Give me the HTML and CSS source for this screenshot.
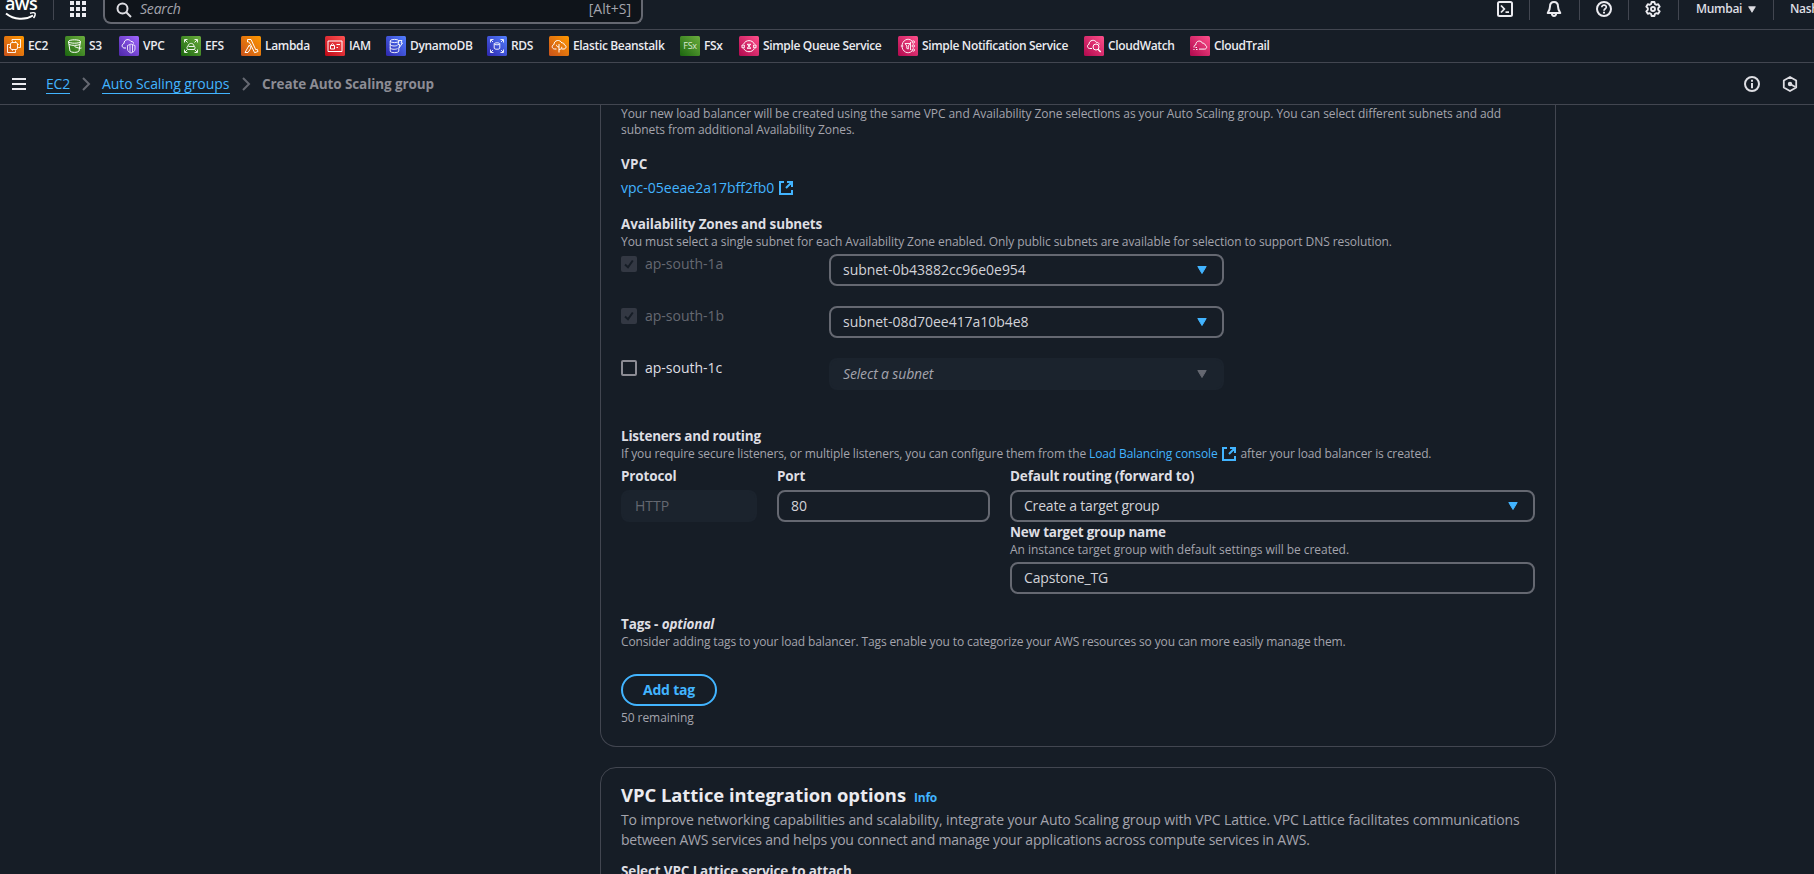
FILE: index.html
```html
<!DOCTYPE html>
<html lang="en">
<head>
<meta charset="utf-8">
<title>Create Auto Scaling group</title>
<link rel="stylesheet" href="styles.css">
</head>
<body>
<svg width="0" height="0" class="defs" aria-hidden="true">
  <defs>
    <linearGradient id="orange" x1="0" y1="1" x2="1" y2="0"><stop offset="0" stop-color="#c8511b"/><stop offset="1" stop-color="#ff9900"/></linearGradient>
    <linearGradient id="green" x1="0" y1="1" x2="1" y2="0"><stop offset="0" stop-color="#1b660f"/><stop offset="1" stop-color="#6cae3e"/></linearGradient>
    <linearGradient id="purple" x1="0" y1="1" x2="1" y2="0"><stop offset="0" stop-color="#4d27a8"/><stop offset="1" stop-color="#a166ff"/></linearGradient>
    <linearGradient id="red" x1="0" y1="1" x2="1" y2="0"><stop offset="0" stop-color="#bd0816"/><stop offset="1" stop-color="#ff5252"/></linearGradient>
    <linearGradient id="blue" x1="0" y1="1" x2="1" y2="0"><stop offset="0" stop-color="#2e27ad"/><stop offset="1" stop-color="#527fff"/></linearGradient>
    <linearGradient id="pink" x1="0" y1="1" x2="1" y2="0"><stop offset="0" stop-color="#b0084d"/><stop offset="1" stop-color="#ff4f8b"/></linearGradient>
    <symbol id="external" viewBox="0 0 16 16"><path d="M6 2H2v12h12v-4M9 2h5v5M14 2 8 8" fill="none" stroke="#42b4ff" stroke-width="2"/></symbol>
    <symbol id="caret" viewBox="0 0 10 8"><path d="M.8.5h8.4L5 7.500z" fill="currentColor" stroke="currentColor" stroke-linejoin="round"/></symbol>
    <symbol id="chevron" viewBox="0 0 9 14"><path d="M1 1l6 6-6 6" fill="none" stroke="#656871" stroke-width="2"/></symbol>
  </defs>
</svg>

<header class="topnav">
  <a class="logo"><span class="logo-text">aws</span>
    <svg class="smile" width="32" height="9" viewBox="0 0 32 9"><path d="M1 1.500C9 8 20 8.500 28 3.500" fill="none" stroke="#fff" stroke-width="2"/><path d="M25 1.300c2-.7 4.500-.6 5 0s0 3-1.500 4.700" fill="none" stroke="#fff" stroke-width="1.500"/></svg>
  </a>
  <div class="apps">
    <svg width="16" height="16" viewBox="0 0 16 16" fill="#ebebf0"><path d="M0 0h4v4H0zM6 0h4v4H6zM12 0h4v4h-4zM0 6h4v4H0zM6 6h4v4H6zM12 6h4v4h-4zM0 12h4v4H0zM6 12h4v4H6zM12 12h4v4h-4z"/></svg>
  </div>
  <div class="search">
    <svg width="16" height="16" viewBox="0 0 16 16" fill="none" stroke="#dedee3" stroke-width="2"><circle cx="6.500" cy="6.500" r="5"/><path d="M10 10l5 5"/></svg>
    <span class="search-placeholder">Search</span>
    <span class="search-key">[Alt+S]</span>
  </div>
  <nav class="utils">
    <span class="util"><svg width="16" height="16" viewBox="0 0 16 16" fill="none" stroke="#ebebf0" stroke-width="2"><rect x="1" y="1" width="14" height="14" rx="1.500"/><path d="M4 4.500 7.300 8 4 11.500M8.500 11.200H12" stroke-width="1.800"/></svg></span>
    <span class="util"><svg width="16" height="16" viewBox="0 0 16 16" fill="none" stroke="#ebebf0" stroke-width="2"><path d="M8 1C5 1 4 3.300 4 5.500 4 8 3.400 9.500 1.700 12h12.600C12.600 9.500 12 8 12 5.500 12 3.300 11 1 8 1zM5.800 12.200c.2 3.600 4.200 3.600 4.400 0" stroke-linejoin="round"/></svg></span>
    <span class="util"><svg width="16" height="16" viewBox="0 0 16 16" fill="none" stroke="#ebebf0" stroke-width="2"><circle cx="8" cy="8" r="7"/><path d="M5.800 6.300c0-3 4.600-2.800 4.500-.1C10.200 7.800 8 7.700 8 9.700" stroke-width="1.700"/><path d="M8 10.800v1.700"/></svg></span>
    <span class="util"><svg width="16" height="16" viewBox="0 0 16 16" fill="none" stroke="#ebebf0" stroke-width="1.900" stroke-linejoin="round"><path d="M6.600 1h2.800l.5 2 1.300.8 2-.6 1.500 2.500L13.200 7.200v1.600l1.500 1.500-1.500 2.500-2-.6-1.300.8-.5 2H6.600l-.5-2-1.300-.8-2 .6-1.500-2.500 1.500-1.500V7.200L1.300 5.700l1.500-2.500 2 .6L6.100 3z"/><circle cx="8" cy="8" r="2"/></svg></span>
    <span class="util region">Mumbai<svg class="caret" width="8" height="7"><use href="#caret"/></svg></span>
    <span class="util user">Nash</span>
  </nav>
</header>

<nav class="favorites">
  <a class="fav fav-ec2"><svg class="tile" viewBox="0 0 20 20"><rect width="20" height="20" rx="1.500" fill="url(#orange)"/><g fill="none" stroke="#fff" stroke-width=".9"><path d="M8 5V3.500H16.500V11.500H15M11.500 15v1.500H3.500V8.500H5"/><rect x="6.500" y="6.500" width="7" height="7" rx="1.500"/><path d="M8.500 5v1.500M11.500 5v1.500M8.500 13.500V15M11.500 13.500V15M5 8.500h1.500M5 11.500h1.500M13.500 8.500H15M13.500 11.500H15" stroke-width=".7"/></g></svg>EC2</a>
  <a class="fav fav-s3"><svg class="tile" viewBox="0 0 20 20"><rect width="20" height="20" rx="1.500" fill="url(#green)"/><g fill="none" stroke="#fff" stroke-width="1"><ellipse cx="9.500" cy="5.500" rx="6" ry="1.700"/><path d="M3.500 5.500 5 15c1 1.800 8 1.800 9 0l1.500-9.500M9.500 10.500c2 1 5.500 2.300 7 1.500M4 8.500c3 1.200 8 1.200 11 0"/></g></svg>S3</a>
  <a class="fav fav-vpc"><svg class="tile" viewBox="0 0 20 20"><rect width="20" height="20" rx="1.500" fill="url(#purple)"/><g fill="none" stroke="#fff" stroke-width="1"><path d="M7 12H5c-2.500-.5-2.500-4 0-4.500C5 3 10.500 2.500 12 5.500c1.500-.3 2.300.5 2.500 2"/><path d="M8.500 9.500 12 8l4 1.500v3.500c0 2-2 3.500-4 4-2-.6-3.500-2-3.500-4zM11 8.700V16M13.500 8.700V16" stroke-width=".8"/></g></svg>VPC</a>
  <a class="fav fav-efs"><svg class="tile" viewBox="0 0 20 20"><rect width="20" height="20" rx="1.500" fill="url(#green)"/><g fill="none" stroke="#fff" stroke-width=".9"><path d="M3.500 6.500v-3h3M13.500 3.500h3v3M3.500 13.500v3h3M16.500 13.500v3h-3M4 4l2.500 2.500M16 4l-2.500 2.500M4 16l2.500-2.500M16 16l-2.500-2.500"/><path d="M7 10c-1.300.5-1.500 3 0 3.500h6c1.500-.5 1.300-3 0-3.500-.2-3-5-4-6 0zM7.500 10.500h5.500"/></g></svg>EFS</a>
  <a class="fav fav-lambda"><svg class="tile" viewBox="0 0 20 20"><rect width="20" height="20" rx="1.500" fill="url(#orange)"/><path d="M6.500 3.500H10l4.800 10.300 1.500-.5.7 2.200-3.400 1.200L9 7.300 7.700 6H6.500zM8.300 9 4 16.500h3l3-4.500z" fill="none" stroke="#fff" stroke-width="1"/></svg>Lambda</a>
  <a class="fav fav-iam"><svg class="tile" viewBox="0 0 20 20"><rect width="20" height="20" rx="1.500" fill="url(#red)"/><g fill="none" stroke="#fff" stroke-width="1"><path d="M3 5h14v10.500H3z"/><path d="M5.500 9.500h4v3.500h-4zM6.300 9.500c0-2.500 2.400-2.500 2.400 0M11.500 8.500h3.500M11.500 11.500H13"/></g></svg>IAM</a>
  <a class="fav fav-dynamodb"><svg class="tile" viewBox="0 0 20 20"><rect width="20" height="20" rx="1.500" fill="url(#blue)"/><g fill="none" stroke="#fff" stroke-width=".9"><ellipse cx="8.500" cy="5" rx="4.300" ry="1.600"/><path d="M4.200 5v10c0 2.200 8.600 2.200 8.600 0v-3M4.200 8.300c0 1.800 5 2.200 7.300 1M4.200 11.600c0 1.800 5 2.200 7.300 1M13 4.500h3L15 7h1.500l-3.500 5 .7-3.500H12z"/></g></svg>DynamoDB</a>
  <a class="fav fav-rds"><svg class="tile" viewBox="0 0 20 20"><rect width="20" height="20" rx="1.500" fill="url(#blue)"/><g fill="none" stroke="#fff" stroke-width=".9"><path d="M3.500 6.500v-3h3M13.500 3.500h3v3M3.500 13.500v3h3M16.500 13.500v3h-3M4 4l2 2M16 4l-2 2M4 16l2-2M16 16l-2-2"/><ellipse cx="10" cy="7.800" rx="2.800" ry="1"/><path d="M7.200 7.800v4.500c0 1.300 5.600 1.300 5.600 0V7.800"/></g></svg>RDS</a>
  <a class="fav fav-beanstalk"><svg class="tile" viewBox="0 0 20 20"><rect width="20" height="20" rx="1.500" fill="url(#orange)"/><g fill="none" stroke="#fff" stroke-width="1"><path d="M7.500 13H5.500C2.500 12.700 2.500 9 5 8.500 5 4 11 3 12.800 7c1.500-.4 2.400.4 2.500 1.800 2.500.6 2.200 3.900-.3 4.200h-2.500M10 8v8.500M10 11c-1.800 0-2.500-.8-2.500-2.200M10 13.500c2 0 2.800-1 2.800-2.700"/></g></svg>Elastic Beanstalk</a>
  <a class="fav fav-fsx"><span class="tile tile-fsx">FSx</span>FSx</a>
  <a class="fav fav-sqs"><svg class="tile" viewBox="0 0 20 20"><rect width="20" height="20" rx="1.500" fill="url(#pink)"/><g fill="none" stroke="#fff" stroke-width="1"><path d="M4.700 8C6.500 3.500 13.500 3.500 15.300 8M4.700 12.500c1.800 4.300 8.800 4.300 10.600 0M3 9h2.300v2.800H3zM14.700 9H17v2.800h-2.300z"/><path d="M8 8.300h4M8 12.300h4M8.500 8.500l3 3.500M11.500 8.500l-3 3.500"/></g></svg>Simple Queue Service</a>
  <a class="fav fav-sns"><svg class="tile" viewBox="0 0 20 20"><rect width="20" height="20" rx="1.500" fill="url(#pink)"/><g fill="none" stroke="#fff" stroke-width=".9"><path d="M14 5c-4-4-10-.5-10 5s6 9 10 5M2.800 10h2.500M7 7.500h5L10.300 10v3l-1.500-.6V10z"/><circle cx="15.300" cy="6" r="1.200"/><circle cx="15.300" cy="10" r="1.200"/><circle cx="15.300" cy="14" r="1.200"/><path d="M12.500 6v8"/></g></svg>Simple Notification Service</a>
  <a class="fav fav-cloudwatch"><svg class="tile" viewBox="0 0 20 20"><rect width="20" height="20" rx="1.500" fill="url(#pink)"/><g fill="none" stroke="#fff" stroke-width="1"><path d="M8 12.500H5.500C2.800 12 3 8.700 5 8.300 5 3.800 11 3 12.500 6.500c1.500-.3 2.400.5 2.700 2"/><circle cx="12" cy="11" r="3"/><path d="M14 13.300l2.700 2.700" stroke-width="1.500"/></g></svg>CloudWatch</a>
  <a class="fav fav-cloudtrail"><svg class="tile" viewBox="0 0 20 20"><rect width="20" height="20" rx="1.500" fill="url(#pink)"/><path d="M4 11.500c0-1.800.4-2.500 1.800-2.700C5.800 4.500 11 3.800 12.600 7.300c1.400-.3 2.300.5 2.600 1.800 2.300.8 1.800 4-.5 4H9M3.500 13.500h1M6 13.500h1.500M5.500 11.500H7" fill="none" stroke="#fff" stroke-width="1"/></svg>CloudTrail</a>
</nav>

<div class="crumbbar">
  <svg class="menu" width="14" height="12" viewBox="0 0 14 12" fill="#ebebf0"><path d="M0 0h14v2H0zM0 5h14v2H0zM0 10h14v2H0z"/></svg>
  <a class="crumb crumb-ec2">EC2</a>
  <svg class="chevron" width="9" height="14"><use href="#chevron"/></svg>
  <a class="crumb crumb-groups">Auto Scaling groups</a>
  <svg class="chevron" width="9" height="14"><use href="#chevron"/></svg>
  <span class="crumb-current">Create Auto Scaling group</span>
  <div class="crumb-tools">
    <svg width="16" height="16" viewBox="0 0 16 16" fill="none" stroke="#dedee3" stroke-width="2"><circle cx="8" cy="8" r="7"/><path d="M8 3.800v2M8 7v5.200"/></svg>
    <svg width="16" height="16" viewBox="0 0 16 16" fill="none" stroke="#dedee3" stroke-width="1.800" stroke-linejoin="round"><path d="M8 1l6.200 3.500v7L8 15l-6.200-3.500v-7z"/><circle cx="8" cy="8" r="1.300" fill="#dedee3"/><path d="M8 8l5.500 3" /></svg>
  </div>
</div>

<main class="content">
  <section class="card card-balancer">
    <p class="hint hint-intro">Your new load balancer will be created using the same VPC and Availability Zone selections as your Auto Scaling group. You can select different subnets and add<br>subnets from additional Availability Zones.</p>
    <div class="field">
      <h3 class="label label-short">VPC</h3>
      <a class="link vpc-link">vpc-05eeae2a17bff2fb0<svg class="ext" width="16" height="16"><use href="#external"/></svg></a>
    </div>
    <div class="field">
      <h3 class="label">Availability Zones and subnets</h3>
      <p class="hint">You must select a single subnet for each Availability Zone enabled. Only public subnets are available for selection to support DNS resolution.</p>
      <div class="zones">
        <div class="zone">
          <span class="check check-locked"><svg width="16" height="16" viewBox="0 0 16 16"><path d="M4 8.500l3 2.800L11.800 4.500" fill="none" stroke="#161d26" stroke-width="2"/></svg></span>
          <span class="zone-name zone-muted">ap-south-1a</span>
          <div class="input select">subnet-0b43882cc96e0e954<svg width="10" height="8"><use href="#caret"/></svg></div>
        </div>
        <div class="zone">
          <span class="check check-locked"><svg width="16" height="16" viewBox="0 0 16 16"><path d="M4 8.500l3 2.800L11.800 4.500" fill="none" stroke="#161d26" stroke-width="2"/></svg></span>
          <span class="zone-name zone-muted">ap-south-1b</span>
          <div class="input select">subnet-08d70ee417a10b4e8<svg width="10" height="8"><use href="#caret"/></svg></div>
        </div>
        <div class="zone">
          <span class="check"></span>
          <span class="zone-name">ap-south-1c</span>
          <div class="input select select-off">Select a subnet<svg width="10" height="8"><use href="#caret"/></svg></div>
        </div>
      </div>
    </div>
    <div class="field field-listeners">
      <h3 class="label label-tight">Listeners and routing</h3>
      <p class="hint hint-listeners">If you require secure listeners, or multiple listeners, you can configure them from the <a class="link">Load Balancing console<svg class="ext" width="16" height="16"><use href="#external"/></svg></a> after your load balancer is created.</p>
      <div class="routing">
        <div><h3 class="label">Protocol</h3><div class="input input-off">HTTP</div></div>
        <div><h3 class="label">Port</h3><div class="input">80</div></div>
        <div>
          <h3 class="label">Default routing (forward to)</h3>
          <div class="input select select-narrow">Create a target group<svg width="10" height="8"><use href="#caret"/></svg></div>
          <h3 class="label label-tight">New target group name</h3>
          <p class="hint hint-target">An instance target group with default settings will be created.</p>
          <div class="input input-name">Capstone_TG</div>
        </div>
      </div>
    </div>
    <div class="field field-tags">
      <h3 class="label">Tags - <i>optional</i></h3>
      <p class="hint hint-tags">Consider adding tags to your load balancer. Tags enable you to categorize your AWS resources so you can more easily manage them.</p>
      <button class="button">Add tag</button>
      <p class="hint">50 remaining</p>
    </div>
  </section>

  <section class="card card-lattice">
    <h2 class="title">VPC Lattice integration options<a class="info">Info</a></h2>
    <p class="desc">To improve networking capabilities and scalability, integrate your Auto Scaling group with VPC Lattice. VPC Lattice facilitates communications<br><span class="desc-second">between AWS services and helps you connect and manage your applications across compute services in AWS.</span></p>
    <h3 class="label label-attach">Select VPC Lattice service to attach</h3>
  </section>
</main>
</body>
</html>
```

FILE: styles.css
```css
* { box-sizing: border-box; }
html, body { height: 874px; overflow: hidden; }
body {
  margin: 0;
  display: flex;
  flex-direction: column;
  background: #161d26;
  color: #dedee3;
  font: 14px/20px "Open Sans", "Noto Sans", sans-serif;
}
.defs { display: block; flex: none; height: 0; }
h2, h3, p { margin: 0; white-space: nowrap; }
svg { flex: none; overflow: visible; }

/* top navigation */
.topnav { flex: none; display: flex; height: 30px; border-bottom: 1px solid #424650; }
.logo { width: 53px; height: 21px; padding-left: 5px; }
.logo-text {
  display: block; height: 10px; color: #fff;
  font-size: 18px; line-height: 6px; font-weight: 600; letter-spacing: -0.6px;
}
.smile { display: block; margin-top: 2px; }
.apps { width: 50px; height: 20px; padding: 1px 0 0 16px; border-left: 1px solid #424650; }
.search {
  display: flex; width: 540px; height: 24px; padding: 0 9px 0 11px;
  border: 2px solid #656871; border-top: 0; border-radius: 0 0 8px 8px;
  background: #0f141a; color: #a4a4ad; line-height: 18px;
}
.search svg { margin-top: 2px; }
.search-placeholder { margin-left: 8px; font-style: italic; letter-spacing: -0.2px; }
.search-key { margin-left: auto; padding-right: 1px; }
.utils { display: flex; margin-left: auto; width: 333px; height: 20px; }
.util { flex: none; width: 50px; padding: 1px 0 0 16px; border-left: 1px solid #424650; }
.util:first-child { width: 48px; border-left: 0; }
.util:nth-child(3) { width: 49px; }
.util svg { display: block; }
.region, .user {
  display: flex; padding: 0 0 0 17px; width: 95px;
  font-size: 12px; font-weight: 600; line-height: 18px; letter-spacing: -0.3px; color: #dedee3;
}
.region .caret { margin: 6px 0 0 6px; }
.user { width: 41px; padding-left: 16px; overflow: hidden; }

/* favorites bar */
.favorites {
  flex: none; display: flex; align-items: center; height: 33px; padding-left: 4px;
  border-bottom: 1px solid #424650;
}
.fav {
  flex: none; display: flex; align-items: center; gap: 4px;
  font-size: 12px; font-weight: 600; letter-spacing: -0.34px; white-space: nowrap; color: #ebebf0;
}
.tile { flex: none; width: 20px; height: 20px; }
.tile-fsx {
  display: flex; align-items: center; justify-content: center; border-radius: 1.5px;
  background: linear-gradient(45deg, #1b660f, #6cae3e); color: #dbe8d3;
  font-size: 9px; font-weight: 400; letter-spacing: -0.3px;
}
.fav-ec2 { width: 61px; }
.fav-s3 { width: 54px; }
.fav-vpc { width: 62px; }
.fav-efs { width: 60px; }
.fav-lambda { width: 84px; }
.fav-iam { width: 61px; }
.fav-dynamodb { width: 101px; }
.fav-rds { width: 62px; }
.fav-beanstalk { width: 131px; }
.fav-fsx { width: 59px; }
.fav-sqs { width: 159px; }
.fav-sns { width: 186px; }
.fav-cloudwatch { width: 106px; }

/* breadcrumbs */
.crumbbar {
  flex: none; display: flex; align-items: center; height: 42px; padding: 0 16px 0 12px;
  border-bottom: 1px solid #424650;
}
.menu { margin-right: 20px; }
.crumb {
  height: 20px; color: #42b4ff; border-bottom: 1px solid #42b4ff; line-height: 20px;
  white-space: nowrap; font-weight: 500; letter-spacing: -0.1px;
}
.crumb-ec2 { width: 24px; letter-spacing: -0.2px; }
.crumb-groups { width: 128px; }
.chevron { margin: 0 11px 0 12px; }
.crumb-current { color: #8c8c94; font-weight: 700; font-size: 13.5px; letter-spacing: -0.1px; padding-top: 1px; }
.crumb-tools { display: flex; gap: 22px; margin-left: auto; }

/* page content */
.content { flex: 1; min-height: 0; padding-left: 600px; overflow: hidden; }
.card { width: 956px; border: 1px solid #424650; padding: 0 20px; }
.card-balancer { height: 642px; border-top: 0; border-radius: 0 0 16px 16px; }
.card-lattice { height: 200px; margin-top: 20px; padding-top: 15px; border-radius: 16px 16px 0 0; }
.hint { font-size: 12px; line-height: 16px; letter-spacing: -0.077px; color: #a4a4ad; }
.hint-intro { padding-top: 1px; }
.field { margin-top: 16px; }
.label { font-size: 13.5px; font-weight: 700; line-height: 20px; letter-spacing: -0.14px; color: #dedee3; }
.label-short { letter-spacing: 0.2px; }
.label-tight { letter-spacing: -0.22px; }
.link { color: #42b4ff; }
.vpc-link { display: flex; align-items: center; gap: 4px; margin-top: 4px; }
.zones { display: grid; row-gap: 20px; margin-top: 4px; }
.zone { display: grid; grid-template-columns: 24px 184px 395px; align-items: start; }
.check { width: 16px; height: 16px; margin-top: 2px; border: 2px solid #8c8c94; border-radius: 2px; }
.check svg { display: block; }
.check-locked { border: 0; background: #333843; }
.zone-name { line-height: 20px; }
.zone-muted { color: #656871; }
.input {
  height: 32px; padding: 0 12px; border: 2px solid #656871; border-radius: 8px;
  line-height: 28px; color: #d2d2d8;
}
.input-off { border-color: #1b232d; background: #1b232d; color: #656871; }
.input-name { letter-spacing: -0.15px; }
.select { display: flex; justify-content: space-between; align-items: center; padding-right: 15px; letter-spacing: -0.03px; }
.select svg { color: #42b4ff; margin-bottom: 1px; }
.select-off { border-color: #1b232d; background: #1b232d; color: #a4a4ad; font-style: italic; letter-spacing: -0.15px; }
.select-off svg { color: #656871; }
.select-narrow { letter-spacing: -0.2px; }
.field-listeners { margin-top: 36px; }
.hint-listeners { letter-spacing: -0.108px; height: 16px; }
.hint-listeners .ext { margin: 0 1px 0 3px; vertical-align: -4px; }
.routing { display: grid; grid-template-columns: 136px 213px 525px; column-gap: 20px; margin-top: 4px; }
.routing > div > .label + .input { margin-top: 4px; }
.routing .hint { margin-bottom: 4px; }
.hint-target { letter-spacing: -0.043px; }
.field-tags { margin-top: 20px; }
.hint-tags { letter-spacing: -0.125px; }
.button {
  display: block; width: 96px; height: 32px; margin: 24px 0 4px; padding: 0;
  border: 2px solid #42b4ff; border-radius: 16px; background: transparent; color: #42b4ff;
  font: 700 14px/26px "Open Sans", "Noto Sans", sans-serif; letter-spacing: -0.2px;
}
.title { height: 23px; font-size: 18.4px; line-height: 24px; font-weight: 700; letter-spacing: -0.02px; color: #ebebf0; }
.info { margin-left: 8px; font-size: 12px; line-height: 16px; letter-spacing: -0.23px; color: #42b4ff; }
.desc { margin-top: 4px; letter-spacing: -0.111px; color: #a4a4ad; }
.desc-second { letter-spacing: -0.226px; }
.label-attach { margin-top: 11px; }
```
